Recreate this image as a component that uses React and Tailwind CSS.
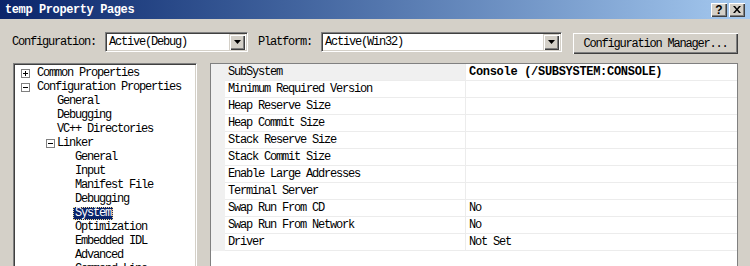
import React from 'react';

const font = { fontFamily: "'Liberation Mono', 'DejaVu Sans Mono', monospace" };

const treeItems = [
    { label: 'Common Properties', box: '+', level: 0 },
    { label: 'Configuration Properties', box: '-', level: 0 },
    { label: 'General', level: 1 },
    { label: 'Debugging', level: 1 },
    { label: 'VC++ Directories', level: 1 },
    { label: 'Linker', box: '-', level: 1 },
    { label: 'General', level: 2 },
    { label: 'Input', level: 2 },
    { label: 'Manifest File', level: 2 },
    { label: 'Debugging', level: 2 },
    { label: 'System', level: 2, selected: true },
    { label: 'Optimization', level: 2 },
    { label: 'Embedded IDL', level: 2 },
    { label: 'Advanced', level: 2 },
    { label: 'Command Line', level: 2 },
];

const props = [
    { name: 'SubSystem', value: 'Console (/SUBSYSTEM:CONSOLE)', bold: true, active: true },
    { name: 'Minimum Required Version', value: '' },
    { name: 'Heap Reserve Size', value: '' },
    { name: 'Heap Commit Size', value: '' },
    { name: 'Stack Reserve Size', value: '' },
    { name: 'Stack Commit Size', value: '' },
    { name: 'Enable Large Addresses', value: '' },
    { name: 'Terminal Server', value: '' },
    { name: 'Swap Run From CD', value: 'No' },
    { name: 'Swap Run From Network', value: 'No' },
    { name: 'Driver', value: 'Not Set' },
];

const ExpandBox = ({ sign }) => (
    <div className="w-[9px] h-[9px] border border-[#808080] bg-white relative flex-shrink-0">
        <div className="absolute left-[1px] top-[3px] w-[5px] h-[1px] bg-black" />
        {sign === '+' && <div className="absolute left-[3px] top-[1px] w-[1px] h-[5px] bg-black" />}
    </div>
);

const ComboBox = ({ value, width }) => (
    <div className={`${width} h-[20px] bg-white border border-t-[#808080] border-l-[#808080] border-b-white border-r-white shadow-[inset_1px_1px_0_#404040,inset_-1px_-1px_0_#d4d0c8] flex items-center pl-[3px] pr-[2px]`}>
        <span className="flex-1 text-[12px] tracking-[-1.2px] leading-none text-black">{value}</span>
        <div className="w-[16px] h-[16px] bg-[#d4d0c8] shadow-[inset_1px_1px_0_#d4d0c8,inset_2px_2px_0_#fff,inset_-1px_-1px_0_#404040,inset_-2px_-2px_0_#808080] flex items-center justify-center">
            <svg width="7" height="4" viewBox="0 0 7 4"><path d="M0 0h7L3.5 4z" fill="#000" /></svg>
        </div>
    </div>
);

const CaptionButton = ({ children }) => (
    <div className="w-[16px] h-[14px] bg-[#d4d0c8] shadow-[inset_1px_1px_0_#fff,inset_-1px_-1px_0_#404040,inset_-2px_-2px_0_#808080] flex items-center justify-center text-black">
        {children}
    </div>
);

function App() {
    return (
        <div className="w-[750px] h-[266px] bg-[#d4d0c8] overflow-hidden flex flex-col text-black" style={font}>
            {/* Title bar */}
            <div className="h-[19px] flex items-center justify-between bg-gradient-to-r from-[#0a246a] to-[#a6caf0] pl-[5px] pr-[5px] flex-shrink-0">
                <span className="text-white font-bold text-[12px] tracking-[-0.4px] leading-none">temp Property Pages</span>
                <div className="flex gap-[2px]">
                    <CaptionButton>
                        <span className="text-[12px] font-bold leading-none" style={{ fontFamily: "'Liberation Sans', sans-serif" }}>?</span>
                    </CaptionButton>
                    <CaptionButton>
                        <svg width="8" height="7" viewBox="0 0 8 7"><path d="M0 0h2l2 2.5L6 0h2L5 3.5 8 7H6L4 4.5 2 7H0l3-3.5z" fill="#000" /></svg>
                    </CaptionButton>
                </div>
            </div>

            {/* Configuration row */}
            <div className="flex items-start pl-[12px] pt-[13px] flex-shrink-0">
                <span className="h-[20px] flex items-center text-[12px] tracking-[-1.2px] leading-none w-[93px]">Configuration:</span>
                <ComboBox value="Active(Debug)" width="w-[143px]" />
                <span className="h-[20px] flex items-center text-[12px] tracking-[-1.2px] leading-none ml-[10px] w-[63px]">Platform:</span>
                <ComboBox value="Active(Win32)" width="w-[241px]" />
                <div className="ml-[11px] mt-[1px] w-[165px] h-[21px] bg-[#d4d0c8] shadow-[inset_1px_1px_0_#fff,inset_-1px_-1px_0_#404040,inset_-2px_-2px_0_#808080] flex items-center justify-center text-[12px] tracking-[-1.2px] leading-none">
                    Configuration Manager...
                </div>
            </div>

            {/* Panels */}
            <div className="flex pl-[13px] mt-[9px] flex-1 min-h-0 gap-[13px]">
                {/* Tree */}
                <div className="w-[184px] h-[230px] bg-white border border-t-[#808080] border-l-[#808080] border-b-white border-r-white shadow-[inset_1px_1px_0_#404040,inset_-1px_-1px_0_#d4d0c8] pt-[2px] px-[1px] overflow-hidden">
                    {treeItems.map((item, i) => (
                        <div key={i} className="h-[14px] flex items-center text-[12px] tracking-[-1.2px] leading-none whitespace-nowrap">
                            {item.level === 0 && (
                                <div className="flex items-center pl-[6px]">
                                    <ExpandBox sign={item.box} />
                                    <span className="ml-[7px]">{item.label}</span>
                                </div>
                            )}
                            {item.level === 1 && (
                                <div className="flex items-center pl-[31px]">
                                    {item.box ? <ExpandBox sign={item.box} /> : <div className="w-[9px]" />}
                                    <span className="ml-[2px]">{item.label}</span>
                                </div>
                            )}
                            {item.level === 2 && (
                                <div className="flex items-center pl-[58px]">
                                    {item.selected ? (
                                        <span className="h-[13px] px-[1px] flex items-center bg-[#0a246a] text-white border border-dotted border-[#f5db95]">{item.label}</span>
                                    ) : (
                                        <span className="px-[2px]">{item.label}</span>
                                    )}
                                </div>
                            )}
                        </div>
                    ))}
                </div>

                {/* Property grid */}
                <div className="w-[528px] h-[230px] bg-white border border-[#808080]">
                    {props.map((p, i) => (
                        <div key={i} className="h-[17px] flex text-[12px] tracking-[-1.2px] leading-none">
                            <div className="w-[14px] bg-[#f0f0f0]" />
                            <div className={`w-[240px] flex items-center pl-[3px] border-b border-[#ececec] ${p.active ? 'bg-[#f0f0f0]' : ''}`}>
                                {p.name}
                            </div>
                            <div className="w-[1px] bg-[#ececec]" />
                            <div className={`flex-1 flex items-center pl-[3px] border-b border-[#ececec] ${p.bold ? 'font-bold tracking-[-0.3px]' : ''}`}>
                                {p.value}
                            </div>
                        </div>
                    ))}
                </div>
            </div>
        </div>
    );
}

export default App;
